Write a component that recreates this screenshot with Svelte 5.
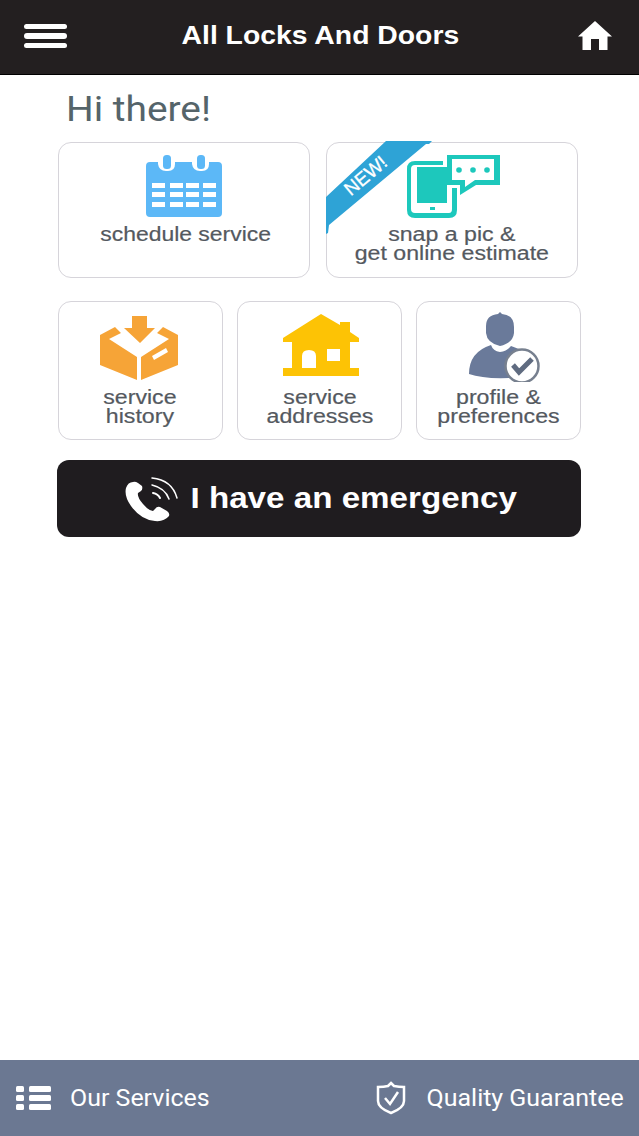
<script>
const smallTiles = [
	{ lines: ['service', 'history'], icon: 'box' },
	{ lines: ['service', 'addresses'], icon: 'house' },
	{ lines: ['profile &', 'preferences'], icon: 'user' }
]
</script>

<div class="page">
	<header>
		<button class="burger" aria-label="menu"><span></span><span></span><span></span></button>
		<h1>All Locks And Doors</h1>
		<svg class="home" viewBox="0 0 34 29" width="34" height="29">
			<path fill="#fff" d="M17 0 L34 15.5 L29.5 15.5 L29.5 29 L21 29 L21 18 L13 18 L13 29 L4.5 29 L4.5 15.5 L0 15.5 Z" />
		</svg>
	</header>

	<main>
		<h2>Hi there!</h2>

		<div class="row top">
			<div class="tile">
				<svg class="icon cal" viewBox="0 0 76 63" width="76" height="63">
					<path fill="#5cb8f7" d="M4 7 H12 V9 Q13 16 20 16 H22 Q29 16 29 9 V7 H46 V9 Q47 16 54 16 H56 Q63 16 63 9 V7 H72 Q76 7 76 11 V58 Q76 62 72 62 H4 Q0 62 0 58 V11 Q0 7 4 7 Z" />
					<rect fill="#5cb8f7" x="17" y="0" width="8" height="14" rx="3.5" />
					<rect fill="#5cb8f7" x="51" y="0" width="8" height="14" rx="3.5" />
					{#each [28, 37, 47] as y}
						{#each [6, 24, 40, 57] as x}
							<rect fill="#fff" {x} {y} width="13" height="5" />
						{/each}
					{/each}
				</svg>
				<p class="one">schedule service</p>
			</div>
			<div class="tile">
				<div class="ribbon">
					<svg viewBox="0 0 106 93" width="106" height="93">
						<path fill="#2ea3d6" d="M0 56 L60 0 L106 0 L103 3 L100 3 L3 84 L2 92 L0 93 Z" />
					</svg>
					<span>NEW!</span>
				</div>
				<svg class="icon snap" viewBox="0 0 93 63" width="93" height="63">
					<path fill="#1dc8bc" d="M8 6 H36 V10 H8 Q4 10 4 14 V54 Q4 58 8 58 H42 Q45 58 45 54 V33 H50 V55 Q50 63 42 63 H8 Q0 63 0 55 V14 Q0 6 8 6 Z" />
					<rect fill="#1dc8bc" x="10" y="12" width="30" height="36" />
					<rect fill="#1dc8bc" x="23" y="52" width="5" height="3" />
					<path fill="#1dc8bc" fill-rule="evenodd" d="M40 0 H93 V30 H69 L53 40 V30 H40 Z M45 4 V25 H58 V32 L68 25 H87 V4 Z" />
					<circle fill="#1dc8bc" cx="52" cy="15" r="2.8" />
					<circle fill="#1dc8bc" cx="66" cy="15" r="2.8" />
					<circle fill="#1dc8bc" cx="80" cy="15" r="2.8" />
				</svg>
				<p class="two">snap a pic &amp;<br />get online estimate</p>
			</div>
		</div>

		<div class="row bottom">
			{#each smallTiles as tile}
				<div class="tile">
					{#if tile.icon === 'box'}
						<svg class="icon box" viewBox="0 0 80 66" width="80" height="66">
							<path fill="#f6a437" d="M32 1 H47 V13 H55 L40 28 L24 13 H32 Z" />
							<path fill="#f6a437" d="M0 20 L15 12 L21 18 L9 24 L37 42 L37 65 L0 50 Z" />
							<path fill="#f6a437" d="M78 20 L63 12 L57 18 L69 24 L41 42 L41 65 L78 50 Z" />
							<path fill="#fff" d="M52 41 L66 33 L68 37 L54 45 Z" />
						</svg>
					{:else if tile.icon === 'house'}
						<svg class="icon house" viewBox="0 0 76 62" width="76" height="62">
							<path fill="#fdc305" fill-rule="evenodd" d="M38 0 L57 11 V8 H67 V18 L76 24 V28 H67 V54 H76 V62 H0 V54 H9 V28 H0 V24 Z M19 54 H33 V42 Q33 36 26 36 Q19 36 19 42 Z M44 35 V47 H57 V35 Z" />
						</svg>
					{:else}
						<svg class="icon user" viewBox="0 0 72 70" width="72" height="70">
							<path fill="#6a7a9a" d="M31 0 L33 2 Q45 3 45 15 V21 Q44 31 31 34 Q18 31 17 21 V14 Q17 3 29 2 Z" />
							<path fill="#6a7a9a" d="M22 33 Q24 39 31 40 Q38 39 42 34 Q53 38 60 42 L40 66 Q14 67 0 62 Q0 40 22 33 Z" />
							<circle fill="#fff" stroke="#77808f" stroke-width="2.5" cx="53" cy="54" r="16.5" />
							<path fill="none" stroke="#5f6b80" stroke-width="5" d="M44 53 L50 60 L63 47" />
						</svg>
					{/if}
					<p class={tile.icon}>{tile.lines[0]}<br />{tile.lines[1]}</p>
				</div>
			{/each}
		</div>

		<button class="emergency">
			<svg viewBox="0 0 54 46" width="54" height="46">
				<path fill="#fff" d="M8 6 Q3 6 1 12 Q-1 20 6 30 Q16 44 30 45 Q39 46 44 40 Q45 37 42 35 L35 31 Q32 30 30 33 L28 35 Q24 35 18 28 Q12 21 13 17 L16 15 Q18 13 17 10 L13 7 Q10 5 8 6 Z" />
				<g fill="none" stroke="#fff" stroke-linecap="round">
					<path stroke-width="1.5" d="M27 2 Q47 4 52 22" />
					<path stroke-width="1.5" d="M27 9 Q40 12 44 23" />
					<path stroke-width="2" d="M28 17 Q33 18 35 22" />
				</g>
			</svg>
			<span>I have an emergency</span>
		</button>
	</main>

	<footer>
		<div class="link services">
			<svg viewBox="0 0 36 28" width="36" height="28">
				<g fill="#fff">
					<rect x="0" y="2" width="8" height="6" rx="1.5" />
					<rect x="0" y="11" width="8" height="6" rx="1.5" />
					<rect x="0" y="20" width="8" height="6" rx="1.5" />
					<rect x="13" y="2" width="22" height="6" rx="1.5" />
					<rect x="13" y="11" width="22" height="6" rx="1.5" />
					<rect x="13" y="20" width="22" height="6" rx="1.5" />
				</g>
			</svg>
			<span>Our Services</span>
		</div>
		<div class="link quality">
			<svg viewBox="0 0 30 34" width="30" height="34">
				<path fill="none" stroke="#fff" stroke-width="2.5" d="M15 2 L18 5 Q23 6 28 6 V20 Q28 27 15 32 Q2 27 2 20 V6 Q8 6 12 5 Z" />
				<path fill="none" stroke="#fff" stroke-width="2.5" d="M9 17 L14 23 L22 11" />
			</svg>
			<span>Quality Guarantee</span>
		</div>
	</footer>
</div>

<style>
:global(body) {
	margin: 0;
	background: #fff;
}
.page {
	display: flex;
	flex-direction: column;
	height: 1136px;
	overflow: hidden;
	font-family: "Liberation Sans", Arial, sans-serif;
}
header {
	display: flex;
	align-items: center;
	justify-content: space-between;
	box-sizing: border-box;
	height: 75px;
	padding: 0 27px 2px 24px;
	background: #231f20;
	border-bottom: 1px solid #000;
}
.burger {
	display: flex;
	flex-direction: column;
	gap: 4px;
	width: 43px;
	padding: 0;
	border: 0;
	background: none;
}
.burger span {
	height: 5.5px;
	border-radius: 3px;
	background: #fff;
}
h1 {
	margin: 0 4px 2px 0;
	color: #fff;
	font-size: 26px;
	font-weight: 700;
	transform: scaleX(1.09);
}
.home {
	margin-bottom: 1px;
}
main {
	flex: 1;
	padding: 0 58px 0 57px;
}
h2 {
	margin: 15px 0 12px 9px;
	height: 40px;
	color: #55646a;
	font-family: Roboto, sans-serif;
	font-size: 35px;
	font-weight: 400;
	line-height: 40px;
	transform: scaleX(1.11);
	transform-origin: left center;
}
.row {
	display: flex;
}
.top {
	gap: 16px;
	margin-left: 1px;
}
.bottom {
	gap: 14px;
	margin: 23px -1px 20px 1px;
}
.tile {
	position: relative;
	display: flex;
	flex-direction: column;
	align-items: center;
	box-sizing: border-box;
	border: 1.5px solid #d6d4da;
	border-radius: 13px;
	background: #fff;
}
.top .tile {
	width: 252px;
	height: 136px;
	padding-top: 11.5px;
}
.bottom .tile {
	width: 165px;
	height: 139px;
	padding-top: 11.5px;
}
.tile p {
	margin: 0;
	color: #54595f;
	font-size: 19.5px;
	line-height: 19px;
	text-align: center;
	transform: scaleX(1.187);
	-webkit-text-stroke: 0.2px #54595f;
}
.top .one,
.top .two {
	margin-top: 7.5px;
}
.top .one {
	margin-left: 3px;
	transform: scaleX(1.175);
}
.bottom .tile p {
	margin-top: auto;
	margin-bottom: 13px;
}
.bottom .tile p.box {
	margin-right: 2px;
}
.snap {
	margin-left: 3px;
}
svg.box {
	margin-left: -1px;
	margin-top: 1px;
}
svg.house {
	margin-left: 2px;
}
svg.user {
	margin-top: -2px;
	margin-left: 13px;
}
.ribbon {
	position: absolute;
	left: -1px;
	top: -2px;
	width: 106px;
	height: 93px;
}
.ribbon svg {
	display: block;
}
.ribbon span {
	position: absolute;
	left: 15px;
	top: 24px;
	color: #fff;
	font-size: 19px;
	transform: rotate(-40deg);
	-webkit-text-stroke: 0.3px #fff;
}
.emergency {
	display: flex;
	align-items: center;
	justify-content: center;
	gap: 12px;
	width: 524px;
	height: 77px;
	padding: 0 0 0 3px;
	border: 0;
	border-radius: 12px;
	background: #1f1c1f;
	color: #fff;
	font-family: "Liberation Sans", Arial, sans-serif;
	font-size: 29px;
	font-weight: 700;
}
.emergency span {
	margin: 0 20px;
	transform: scaleX(1.144);
}
footer {
	display: flex;
	align-items: center;
	justify-content: space-between;
	box-sizing: border-box;
	height: 76px;
	padding: 0 15px 0 16px;
	background: #6b7892;
	color: #fff;
	font-family: Roboto, sans-serif;
	font-size: 23px;
}
.link {
	display: flex;
	align-items: center;
}
.link span {
	transform: scaleX(1.085);
}
.services {
	gap: 18px;
}
.services span {
	transform-origin: left center;
}
.quality {
	gap: 36px;
}
.quality span {
	transform-origin: right center;
}
</style>
